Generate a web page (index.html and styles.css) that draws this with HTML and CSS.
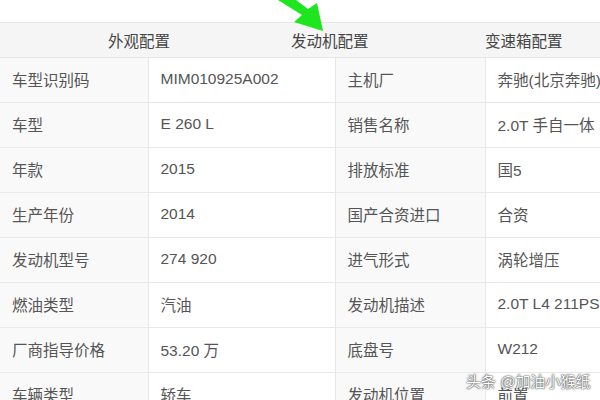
FILE: index.html
```html
<!DOCTYPE html>
<html>
  <head>
    <meta charset="utf-8">
    <title>车辆配置</title>
    <link rel="stylesheet" href="styles.css">
  </head>
  <body>
    <div class="page">
      <svg class="arrow" width="70" height="40" viewBox="0 0 70 40">
        <polygon points="8,0 26,0 38,9 47,3 53,31 24,22 32,15" fill="#1ee61e"/>
      </svg>

      <div class="tabs">
        <span class="tab tab-first">外观配置</span>
        <span class="tab tab-second">发动机配置</span>
        <span class="tab">变速箱配置</span>
      </div>

      <table class="spec">
        <colgroup>
          <col class="c-label1">
          <col class="c-value1">
          <col class="c-label2">
          <col class="c-value2">
        </colgroup>
        <tr><td class="label">车型识别码</td><td>MIM010925A002</td><td class="label">主机厂</td><td>奔驰(北京奔驰)</td></tr>
        <tr><td class="label">车型</td><td>E 260 L</td><td class="label">销售名称</td><td>2.0T 手自一体</td></tr>
        <tr><td class="label">年款</td><td>2015</td><td class="label">排放标准</td><td>国5</td></tr>
        <tr><td class="label">生产年份</td><td>2014</td><td class="label">国产合资进口</td><td>合资</td></tr>
        <tr><td class="label">发动机型号</td><td>274 920</td><td class="label">进气形式</td><td>涡轮增压</td></tr>
        <tr><td class="label">燃油类型</td><td>汽油</td><td class="label">发动机描述</td><td>2.0T L4 211PS</td></tr>
        <tr><td class="label">厂商指导价格</td><td>53.20 万</td><td class="label">底盘号</td><td>W212</td></tr>
        <tr><td class="label">车辆类型</td><td>轿车</td><td class="label">发动机位置</td><td>前置</td></tr>
      </table>

      <div class="watermark">头条 @加油小猴纸</div>
    </div>
  </body>
</html>
```

FILE: styles.css
```css
html, body {
  margin: 0;
  background: #fff;
  font-family: "Liberation Sans", "Noto Sans CJK SC", sans-serif;
}

.page {
  position: relative;
  width: 600px;
  height: 400px;
  overflow: hidden;
  padding-top: 22px;
  box-sizing: border-box;
}

.arrow {
  position: absolute;
  left: 270px;
  top: 0;
}

.tabs {
  display: flex;
  height: 33px;
  align-items: center;
  padding: 0 0 1px 108px;
  background-color: #f5f5f5;
  border-top: 1px solid #e6e6e6;
  border-bottom: 1px solid #e6e6e6;
  font-size: 15.5px;
  color: #444;
  width: 660px;
}

.tab-first {
  width: 183px;
}

.tab-second {
  width: 194px;
}

.spec {
  border-collapse: collapse;
  table-layout: fixed;
  width: 660px;
  font-size: 15.5px;
  color: #555;
}

.c-label1 { width: 148px; }
.c-value1 { width: 187px; }
.c-label2 { width: 150px; }
.c-value2 { width: 175px; }

.spec td {
  height: 41px;
  padding: 0 0 3px 12px;
  border: 1px solid #e8e8e8;
  border-top: none;
  white-space: nowrap;
  overflow: hidden;
}

.spec td:first-child {
  border-left: none;
}

.spec td.label {
  background-color: #f9f9f9;
}

.watermark {
  position: absolute;
  left: 466px;
  top: 370px;
  font-size: 15px;
  color: #fff;
  text-shadow: 0 0 2px #333, 0 0 1px #333;
}
```
